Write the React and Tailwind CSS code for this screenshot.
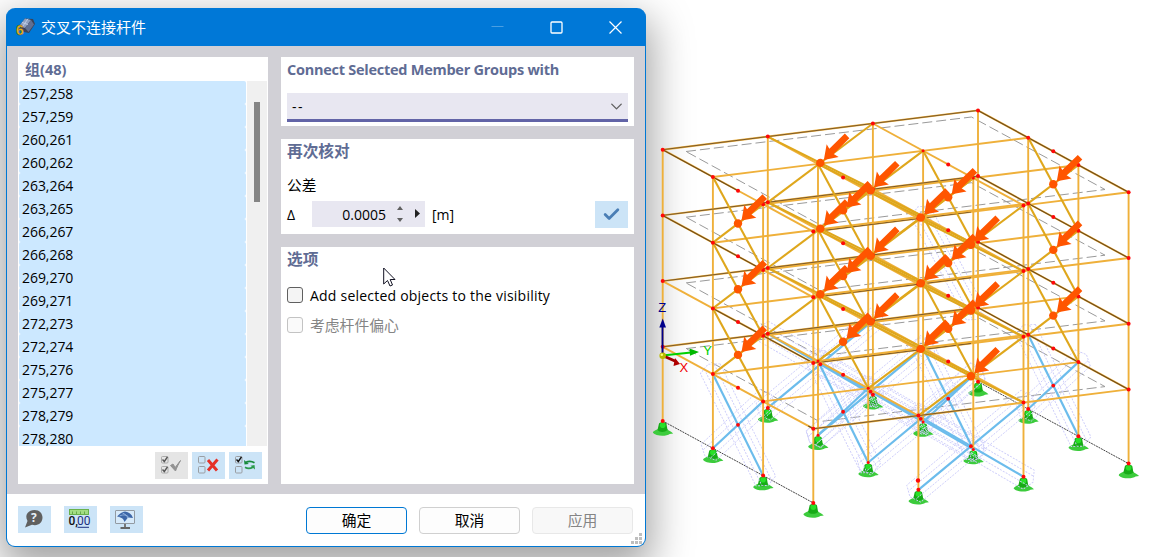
import { Check, ChevronDown } from 'lucide-react'

const groups = [
  '257,258', '257,259', '260,261', '260,262', '263,264', '263,265', '266,267', '266,268',
  '269,270', '269,271', '272,273', '272,274', '275,276', '275,277', '278,279', '278,280',
]

const N = [0, 1, 2, 3]
const LEVEL_Y = [0, 65.7, 131.4, 197.1, 271.3]

// projects a grid node (i = depth row, j = bay, k = storey) to the canvas
const pt = (i, j, k) => {
  const k0 = Math.floor(k)
  const dy = k0 === k ? LEVEL_Y[k] : (LEVEL_Y[k0] + LEVEL_Y[k0 + 1]) / 2
  return [662.7 + i * 50.2 + j * 105.1, 149.7 + i * 27.3 - j * 13.1 + dy]
}

function Member({ a, b, color = '#efb03a', width = 1.9, dash }) {
  return <line x1={a[0]} y1={a[1]} x2={b[0]} y2={b[1]} stroke={color} strokeWidth={width} strokeDasharray={dash} />
}

// both diagonals of every braced field in one storey
const bracing = (k) => [
  ...N.flatMap((i) => [
    [pt(i, 1, k), pt(i, 2, k + 1)],
    [pt(i, 2, k), pt(i, 1, k + 1)],
  ]),
  ...N.flatMap((j) => [
    [pt(1, j, k), pt(2, j, k + 1)],
    [pt(2, j, k), pt(1, j, k + 1)],
  ]),
]

const centers = (k) => [
  ...N.map((i) => pt(i, 1.5, k + 0.5)),
  ...N.map((j) => pt(1.5, j, k + 0.5)),
]

function Support({ x, y }) {
  return (
    <g transform={`translate(${x} ${y})`}>
      <path d="M-4.500 8 C-8 9.500 -10 10.500 -9.800 11.800 C-7 15.500 4 15.500 7 13 L10.500 12.500 C8 10 6 10 4.500 8 Z" fill="#3ccb3c" />
      <path d="M-3.800 3 C-4 0.500 3.800 0.500 3.800 3 L4.800 9 C2 11.500 -3 11.500 -5.200 9 Z" fill="#16ab16" />
      <circle cx="0" cy="4.200" r="2.800" fill="#28e028" />
    </g>
  )
}

function Arrow({ x, y }) {
  return (
    <path
      transform={`translate(${x} ${y})`}
      d="M3.500 -3 L6.300 -18.700 L9 -14.200 L24.500 -29.300 L29 -24.600 L13.300 -9 L18.300 -5.800 Z"
      fill="#ff5500"
    />
  )
}

// dotted outline of the selection box that surrounds a diagonal
function GhostBox({ a, b }) {
  const len = Math.hypot(b[0] - a[0], b[1] - a[1])
  const angle = (Math.atan2(b[1] - a[1], b[0] - a[0]) * 180) / Math.PI
  return (
    <g transform={`translate(${a[0]} ${a[1]}) rotate(${angle})`} fill="none" stroke="#cdcdfa" strokeWidth="0.900" strokeDasharray="2 1.300">
      <path d={`M-6 -11 H${len + 6} L${len + 11} 0 L${len + 6} 11 H-6 L-11 0 Z`} />
      <path d={`M-8 -5.500 H${len + 8} M-8 5.500 H${len + 8}`} />
    </g>
  )
}

function StructureView() {
  return (
    <svg className="ml-1 h-[557px] w-[526px] shrink-0" viewBox="650 0 526 557">
      {/* base edges */}
      <Member a={pt(0, 0, 4)} b={pt(3, 0, 4)} color="#444" width={1} dash="2 0.8" />
      <Member a={pt(0, 3, 4)} b={pt(3, 3, 4)} color="#444" width={1} dash="2 0.8" />

      {/* slab insets */}
      {N.map((k) => (
        <path
          key={k}
          transform={`translate(0 ${LEVEL_Y[k]})`}
          d="M686 151.500 L971.500 117 L1105 189.500 L819.500 224.500 Z"
          fill="none"
          stroke="#9a9a9a"
          strokeWidth="1"
          strokeDasharray="10 4"
        />
      ))}

      {/* lower storey */}
      {N.flatMap((i) => N.map((j) => {
        const [x, y] = pt(i, j, 4)
        return <Support key={`${i}${j}`} x={x} y={y} />
      }))}
      {bracing(3).map(([a, b], n) => <GhostBox key={n} a={a} b={b} />)}
      <GhostBox a={pt(1, 2, 1)} b={pt(2, 2, 2)} />
      {bracing(3).map(([a, b], n) => <Member key={n} a={a} b={b} color="#6cbcec" width={2.2} />)}

      {/* columns */}
      {N.flatMap((i) => N.map((j) => <Member key={`${i}${j}`} a={pt(i, j, 0)} b={pt(i, j, 4)} />))}

      {/* beams and slab edges */}
      {N.map((k) => (
        <g key={k}>
          {N.map((i) => <Member key={i} a={pt(i, 0, k)} b={pt(i, 3, k)} />)}
          {N.map((j) => <Member key={j} a={pt(0, j, k)} b={pt(3, j, k)} />)}
          <Member a={pt(0, 0, k)} b={pt(0, 3, k)} color="#7a5a2e" width={1} />
          <Member a={pt(0, 3, k)} b={pt(3, 3, k)} color="#6b4a1c" width={1.1} />
          {k === 0 && <Member a={pt(0, 0, k)} b={pt(1.5, 0, k)} color="#6b4a1c" width={1.1} />}
          {k === 1 && <Member a={pt(0, 0, k)} b={pt(2, 0, k)} color="#6b4a1c" width={1.1} />}
          {k === 2 && <Member a={pt(1, 0, k)} b={pt(3, 0, k)} color="#6b4a1c" width={1.1} />}
          {k === 3 && <Member a={pt(2.9, 0, k)} b={pt(3, 0, k)} color="#6b4a1c" width={1.1} />}
          <Member a={pt(3, 0, k)} b={pt(3, 1.5, k)} color="#7a5a2e" width={1.1} />
        </g>
      ))}

      {/* upper bracing */}
      {[0, 1, 2].flatMap((k) => bracing(k).map(([a, b], n) => (
        <Member key={`${k}-${n}`} a={a} b={b} color="#dfa71c" width={2.1} />
      )))}

      {/* nodes */}
      <g fill="#ff0808">
        {[0, 1, 2, 3, 4].flatMap((k) => N.flatMap((i) => N.map((j) => {
          const [x, y] = pt(i, j, k)
          const outer = i === 0 || j === 0 || j === 3 || i === 3
          return <circle key={`${k}${i}${j}`} cx={x} cy={y} r={outer ? 2 : 1.5} />
        })))}
        {N.flatMap((k) => N.map((j) => {
          const [x, y] = pt(1.5, j, k)
          return <circle key={`${k}${j}`} cx={x} cy={y} r="2" />
        }))}
        {centers(3).map(([x, y]) => <circle key={`${x}-${y}`} cx={x} cy={y} r="1.900" />)}
        <circle cx="918" cy="480.500" r="2.200" />
      </g>

      {/* crossing markers */}
      {[0, 1, 2].flatMap((k) => centers(k).map(([x, y]) => (
        <g key={`${x}-${y}`}>
          <circle cx={x} cy={y} r="4.200" fill="#ff5500" />
          <Arrow x={x} y={y} />
        </g>
      )))}

      {/* coordinate axes */}
      <g strokeWidth="1.900">
        <path d="M662.500 355 V326" stroke="#00008b" />
        <path d="M659.300 327.500 L662.700 318.500 L666 327.500 Z" fill="#00008b" />
        <path d="M662.500 355.500 L691 352.500" stroke="#00d000" />
        <path d="M689.500 348.500 L699 352 L690 355.700 Z" fill="#00b800" />
        <path d="M662.500 355.500 L676 361.500" stroke="#a00000" strokeWidth="3" />
        <path d="M675 358 L680 364 L673.500 366 Z" fill="#b00000" />
        <circle cx="662.700" cy="355.700" r="3.300" fill="#b8b800" />
        <circle cx="661.800" cy="354.800" r="1.300" fill="#ffff70" />
      </g>
      <g className="font-['Liberation_Sans',sans-serif] text-[13px]">
        <text x="658.300" y="312" fill="#00008b">Z</text>
        <text x="703.300" y="354.500" fill="#00d000">Y</text>
        <text x="679.500" y="372" fill="#f00000">X</text>
      </g>
    </svg>
  )
}

function AppIcon() {
  return (
    <svg className="h-5 w-5" viewBox="0 0 20 20">
      <path d="M3 9 L9 1.500 L17 2 L19 7 L13 16 L8 15 Z" fill="#3a4358" />
      <path d="M3 9 L9 1.500 L15 3 L9 11 Z" fill="#8fa0c0" />
      <path d="M9 11 L15 3 L18 7.500 L12.500 15 Z" fill="#606f92" />
      <path d="M6 5.500 L12 7.500 M12 1.700 L7 9" stroke="#c3cfe6" strokeWidth="0.900" />
      <text x="0" y="18" className="font-['Liberation_Sans',sans-serif] text-[14px] font-bold" fill="#edb926" stroke="#6b5310" strokeWidth="0.400">6</text>
    </svg>
  )
}

function SmallBox({ x, y, checked, color = '#9a9ea3' }) {
  return (
    <g>
      <rect x={x + 0.5} y={y + 0.5} width="6.500" height="6.500" rx="1" fill="none" stroke={color} />
      {checked && <path d={`M${x + 1.5} ${y + 3.5} L${x + 3.3} ${y + 5.5} L${x + 6.5} ${y + 0.8}`} fill="none" stroke={checked} strokeWidth="1.400" />}
    </g>
  )
}

function IconButton({ children, disabled }) {
  return (
    <button className={`flex h-[27px] w-[33px] items-center justify-center ${disabled ? 'bg-[#e5e5e5]' : 'bg-[#cce4f7]'}`}>
      {children}
    </button>
  )
}

function ListButtons() {
  return (
    <div className="mt-[6px] flex justify-end gap-1 pr-[6px]">
      <IconButton disabled>
        <svg className="h-[27px] w-[33px]" viewBox="0 0 33 27">
          <SmallBox x={6} y={4} checked="#555" color="#aaa" />
          <SmallBox x={6} y={14} checked="#555" color="#aaa" />
          <path d="M15.500 13.500 L18 12 L20.200 15.500 L25.500 8.500 C23.500 12 22 15 20.500 19 Z" fill="#929292" stroke="#929292" />
        </svg>
      </IconButton>
      <IconButton>
        <svg className="h-[27px] w-[33px]" viewBox="0 0 33 27">
          <SmallBox x={6} y={4} />
          <SmallBox x={6} y={14} />
          <path d="M16 8 L25 18.500 M25.500 7.500 L16 18.500" stroke="#e53027" strokeWidth="3" />
        </svg>
      </IconButton>
      <IconButton>
        <svg className="h-[27px] w-[33px]" viewBox="0 0 33 27">
          <SmallBox x={6} y={4} checked="#111" />
          <SmallBox x={6} y={14} />
          <path d="M25.500 10.800 C22 8.600 19.500 9 17 10.300" fill="none" stroke="#178a3a" strokeWidth="1.700" />
          <path d="M15 8 L15.500 12.500 L19.800 12 Z" fill="#178a3a" />
          <path d="M16 15.300 C18.500 16.800 21 16.800 24 15.200" fill="none" stroke="#2a9a4a" strokeWidth="1.700" />
          <path d="M26 17.500 L25.500 13 L21.500 13.800 Z" fill="#2a9a4a" />
        </svg>
      </IconButton>
    </div>
  )
}

function GroupList() {
  return (
    <section className="flex h-[427px] w-[250px] flex-col bg-white">
      <h2 className="h-6 pl-[7px] text-[15px] leading-[25px] font-bold text-[#5f6c94]">组<span className="text-[14.5px]">(48)</span></h2>
      <div className="flex h-[365px] pl-px">
        <ul className="w-[227px] overflow-hidden tracking-[-0.05px]">
          {groups.map((g) => (
            <li key={g} className="h-[23px] rounded-[2px] bg-[#cce8ff] pl-[3px] leading-[25px]">{g}</li>
          ))}
        </ul>
        <div className="ml-px flex w-5 flex-col items-center bg-[#f0f0f0] pt-[21px]">
          <div className="h-[100px] w-[6px] bg-[#858585]" />
        </div>
      </div>
      <ListButtons />
    </section>
  )
}

function Panel({ title, className, children, titleClass = 'text-[15.7px]' }) {
  return (
    <section className={`w-[353px] bg-white px-[6px] ${className}`}>
      <h2 className={`h-[26px] leading-[25px] font-bold text-[#5f6c94] ${titleClass}`}>{title}</h2>
      {children}
    </section>
  )
}

function Toggle({ label, disabled }) {
  return (
    <label className={`flex h-[30px] items-center gap-[7px] ${disabled ? 'text-[14.8px] text-[#858585]' : 'tracking-[0.22px]'}`}>
      <span className={`h-4 w-4 rounded-[3px] border ${disabled ? 'border-[#c3c3c3] bg-[#fafafa]' : 'border-[#606060] bg-[#f4f4f4]'}`} />
      {label}
    </label>
  )
}

function Footer() {
  return (
    <footer className="relative flex h-[52px] items-start rounded-b-[8px] bg-white pt-3 pl-[11px]">
      <div className="flex gap-[13px]">
        <IconButton>
          <svg className="h-[27px] w-[33px]" viewBox="0 0 33 27">
            <path d="M7 21.500 L9.500 15 C6 8 11 4 16.500 4 C21.500 4 24.500 7.500 24.500 11.500 C24.500 17 19.500 20.500 14 18.700 Z" fill="#606060" />
            <text x="13" y="16" className="font-['Open_Sans',sans-serif] text-[12px] font-bold" fill="#e8f1f8">?</text>
          </svg>
        </IconButton>
        <IconButton>
          <svg className="h-[27px] w-[33px]" viewBox="0 0 33 27">
            <rect x="5.500" y="3.500" width="19" height="5" fill="#a2dd83" stroke="#68b14c" />
            <path d="M8.500 5.500 V8 M12.500 5.500 V8 M16.500 5.500 V8 M20.500 5.500 V8" stroke="#68a84e" />
            <text x="4.500" y="19" className="font-['Roboto',sans-serif] text-[12px] font-medium" fill="#111">0,</text>
            <text x="13" y="19" className="font-['Roboto',sans-serif] text-[12px]" fill="#1c2f80">00</text>
            <path d="M13.500 21.300 H25" stroke="#1c2f80" />
          </svg>
        </IconButton>
        <IconButton>
          <svg className="h-[27px] w-[33px]" viewBox="0 0 33 27">
            <rect x="5.500" y="4.500" width="19" height="13" rx="0.500" fill="#d7eafa" stroke="#929aa2" />
            <path d="M7 10.500 C10 7.500 12 6 15 5.500 C19 6 21.500 8 23 12 L18 11.500 L14.500 16 C14 13 11 11 7 10.500 Z" fill="#3c66a8" />
            <path d="M9.500 10 C14 8 17 9 19 11.500 M12.500 7 C15 8 17.500 10 17.500 12" fill="none" stroke="#9fc0e8" strokeWidth="0.800" />
            <path d="M15 18 V21" stroke="#777" strokeWidth="2" />
            <path d="M10.500 22 H20" stroke="#666" strokeWidth="2" />
          </svg>
        </IconButton>
      </div>
      <div className="mt-px ml-[163px] flex gap-3 text-[14.8px]">
        <button className="h-[27px] w-[101px] rounded-[4px] border border-[#0078d4] bg-[#fdfdfd]">确定</button>
        <button className="h-[27px] w-[101px] rounded-[4px] border border-[#d0d0d0] bg-[#fdfdfd]">取消</button>
        <button className="h-[27px] w-[101px] rounded-[4px] border border-[#e8e8e8] bg-[#f8f8f8] text-[#858585]">应用</button>
      </div>
      <svg className="absolute right-[3px] bottom-[2px] h-[11px] w-[11px]" viewBox="0 0 11 11" fill="#bfbfbf">
        <path d="M8 0h3v3h-3z M4 4h3v3h-3z M8 4h3v3h-3z M0 8h3v3h-3z M4 8h3v3h-3z M8 8h3v3h-3z" />
      </svg>
    </footer>
  )
}

function WindowButtons() {
  return (
    <div className="mr-[23px] ml-auto flex items-center gap-[46px]">
      <svg className="h-[13px] w-[13px]" viewBox="0 0 13 13"><path d="M0.500 5.500 H12.500" stroke="#4a9fe2" /></svg>
      <svg className="h-[13px] w-[13px]" viewBox="0 0 13 13"><rect x="1" y="1" width="11" height="11" rx="1" fill="none" stroke="#fff" strokeWidth="1.300" /></svg>
      <svg className="h-[13px] w-[13px]" viewBox="0 0 13 13"><path d="M0.500 0.500 L12.500 12.500 M12.500 0.500 L0.500 12.500" stroke="#fff" strokeWidth="1.200" /></svg>
    </div>
  )
}

function Dialog() {
  return (
    <div className="mt-2 ml-[6px] flex h-[539px] w-[640px] shrink-0 flex-col rounded-[9px] border border-t-0 border-[#0078d4] bg-[#0078d7] shadow-[0_16px_40px_6px_rgba(0,0,0,0.36)]">
      <header className="flex h-[38px] items-center pl-[9px] text-white">
        <AppIcon />
        <h1 className="ml-[5px] text-[15px]">交叉不连接杆件</h1>
        <WindowButtons />
      </header>

      <main className="flex h-[448px] gap-[13px] bg-[#d1d0d6] pt-[11px] pl-[11px]">
        <GroupList />
        <div className="flex flex-col gap-[13px]">
          <Panel title="Connect Selected Member Groups with" titleClass="text-[14.5px] tracking-[-0.26px]" className="h-[69px]">
            <div className="mt-[10px] flex h-[29px] items-center justify-between border-b-[3px] border-[#6264a7] bg-[#e8e7f1] pr-[2px] pl-[5px]">
              <span className="tracking-[1.4px]">--</span>
              <ChevronDown className="h-[19px] w-[19px] text-[#606060]" strokeWidth={1.7} />
            </div>
          </Panel>

          <Panel title="再次核对" className="h-[95px]">
            <p className="mt-[9px] h-[22px] text-[14.7px] leading-[22px]">公差</p>
            <div className="mt-[5px] flex h-[27px] items-start">
              <span className="w-[25px] leading-[27px]">Δ</span>
              <div className="flex h-[26px] w-[113px] items-center justify-end bg-[#e8e7f1] pr-1">
                <span>0.0005</span>
                <svg className="ml-[9px] h-[26px] w-[26px]" viewBox="0 0 26 26" fill="#606060">
                  <path d="M2 9 L5 5 L8 9 Z M2 17 L5 21 L8 17 Z" />
                  <path d="M20 8 L25 12.500 L20 17 Z" fill="#222" />
                </svg>
              </div>
              <span className="ml-[7px] leading-[27px]">[m]</span>
              <span className="ml-auto">
                <IconButton><Check className="h-[19px] w-[19px] text-[#4a7eb5]" strokeWidth={3.5} /></IconButton>
              </span>
            </div>
          </Panel>

          <Panel title="选项" className="relative h-[237px]">
            <div className="mt-[7px]">
              <Toggle label="Add selected objects to the visibility" />
              <Toggle label="考虑杆件偏心" disabled />
            </div>
            <svg className="absolute top-5 left-[102px] h-[20px] w-[13px]" viewBox="0 0 13 20">
              <path d="M0.700 1 V17 L4.500 13.500 L7 19 L9.500 18 L7.200 12.500 H12 Z" fill="#fff" stroke="#111122" strokeWidth="1" />
            </svg>
          </Panel>
        </div>
      </main>

      <Footer />
    </div>
  )
}

export default function App() {
  return (
    <div className="flex h-[557px] w-[1176px] items-start overflow-hidden bg-white font-['Open_Sans','Noto_Sans_CJK_SC',sans-serif] text-[14px] text-black">
      <Dialog />
      <StructureView />
    </div>
  )
}
